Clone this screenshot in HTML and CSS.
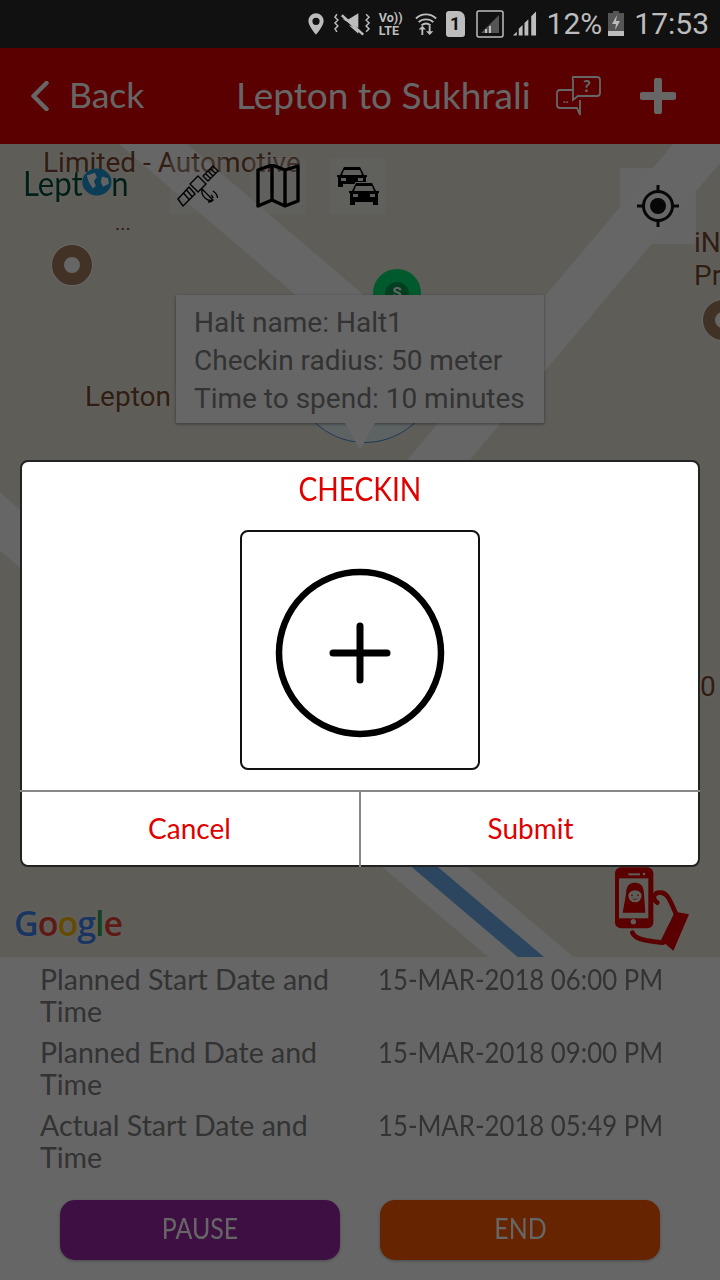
FILE: index.html
```html
<!DOCTYPE html>
<html lang="en">
<head>
<meta charset="utf-8">
<title>Lepton to Sukhrali</title>
<link rel="stylesheet" href="styles.css">
</head>
<body>
<div class="phone">
  <div class="statusbar">
    <svg class="st-ic" width="18" height="24" viewBox="0 0 20 26"><path fill="#bdbdbd" fill-rule="evenodd" d="M10 1a8.500 8.500 0 0 0-8.500 8.500C1.500 15.500 10 25 10 25s8.500-9.500 8.500-15.500A8.500 8.500 0 0 0 10 1zm0 5a4 4 0 1 1 0 8 4 4 0 0 1 0-8z"/></svg>
    <svg class="st-ic st-vib" width="37" height="26" viewBox="0 0 38 26"><path fill="#bdbdbd" d="M9 8l6 0 10-6v15zM15 14l10 9v-5z"/><path stroke="#bdbdbd" stroke-width="2.500" d="M8 4l22 20"/><path fill="none" stroke="#bdbdbd" stroke-width="1.500" d="M3 3l-2 3 3 3-3 3 3 3-3 3 2 3M33 3l3 3-3 3 3 3-3 3 3 3-3 3"/></svg>
    <div class="volte"><span>Vo))</span><span>LTE</span></div>
    <svg class="st-ic st-wifi" width="22" height="26" viewBox="0 0 24 26"><g fill="none" stroke="#bdbdbd" stroke-width="2"><path d="M1 7c6-6 16-6 22 0M4 11c4-4 12-4 16 0M7 14.500c3-2.500 7-2.500 10 0"/></g><path fill="#bdbdbd" d="M6 26v-6H3l4-4 4 4H8v6zM16 16v6h3l-4 4-4-4h3v-6z" transform="translate(1 -1)"/></svg>
    <div class="sim">1</div>
    <svg class="st-ic st-box" width="28" height="28" viewBox="0 0 28 28"><rect x="1" y="1" width="26" height="26" rx="2" fill="none" stroke="#bdbdbd" stroke-width="1.500"/><path fill="#555" d="M23 5v18H5z"/><path fill="#bdbdbd" d="M9 23h2v-4h-2zM13 23h2v-7h-2z"/></svg>
    <svg class="st-ic st-bars" width="25" height="26" viewBox="0 0 26 26"><path fill="#bdbdbd" d="M1 25l4-4v4zM7 25v-7l4-4v11zM13 25V12l4-4v17zM20 25V5l5-5v25z"/></svg>
    <span class="st-text st-pct">12%</span>
    <svg class="st-ic st-bat" width="16" height="26" viewBox="0 0 16 26"><path fill="#555" d="M5 0h6v2h5v18H0V2h5z"/><path fill="#bdbdbd" d="M0 20h16v5H0zM9 4L4 13h4l-1 6 5-9H8z"/></svg>
    <span class="st-text st-time">17:53</span>
  </div>

  <header class="topbar">
    <div class="back">
      <svg width="20" height="30" viewBox="0 0 20 30"><path d="M16.500 2L3.500 15l13 13" fill="none" stroke="#fff" stroke-width="4.500" stroke-linecap="round" stroke-linejoin="round"/></svg>
      <span>Back</span>
    </div>
    <h1 class="title">Lepton to Sukhrali</h1>
    <svg class="chat" width="46" height="42" viewBox="0 0 46 42"><g fill="none" stroke="#fff" stroke-width="1.800"><path d="M17 2h24a3 3 0 0 1 3 3v13a3 3 0 0 1-3 3H22l-5 4V5a3 3 0 0 1 0-3z"/><path d="M17 15H4a3 3 0 0 0-3 3v12a3 3 0 0 0 3 3h17l3 7V25"/></g><text x="27" y="17" class="chat-q">?</text><text x="7" y="28" class="chat-d">..</text></svg>
    <svg class="plus" width="36" height="36" viewBox="0 0 36 36"><path d="M18 3v30M3 18h30" stroke="#fff" stroke-width="8" stroke-linecap="round"/></svg>
  </header>

  <main class="map">
    <svg class="roads" width="720" height="813" viewBox="0 0 720 813">
      <g fill="none" stroke="#fff" stroke-width="44">
        <path d="M106-40L420 228"/>
        <path d="M755-60L351 420" stroke-width="48"/>
        <path d="M-40 343L60 429"/>
      </g>
      <path d="M353 662L578 853" fill="none" stroke="#fff" stroke-width="55"/>
      <path d="M353 662L578 853" fill="none" stroke="#6fb0ef" stroke-width="17"/>
    </svg>

    <span class="lbl lbl-limited">Limited - Automotive</span>
    <div class="logo">Lept<svg class="globe" width="34" height="28" viewBox="0 0 30 30" preserveAspectRatio="none"><circle cx="15" cy="15" r="14.500" fill="#1c9ad8"/><path fill="#f4f8f4" d="M5 8l8-3 2 5-3 4 2 5-3 3-4-7zM20 9l6 2 1 6-6 3-2-5z"/></svg>n</div>
    <span class="lbl lbl-dots">...</span>

    <button class="mapbtn sat" aria-label="Satellite"><svg width="46" height="46" viewBox="0 0 46 46"><g fill="none" stroke="#000" stroke-width="1.400" stroke-linejoin="round"><path d="M28 13L38 3l5 5-10 10zM33 8l5 5M35.500 5.500l5 5M30.500 10.500l5 5"/><path d="M3 36l11-12 6 7L8 43zM8.500 30l6 7M11.500 27l6 7"/><path d="M15 21l8-8 8 8-8 8z"/><path d="M27 26c-1 4 1 7 3 9 2 2 5 3 8 2z"/><path d="M36 32c1.500 1 2 2 2 3M38 28c3 2 4.500 4 4.500 7M33 39c2 0 4-.5 5-2"/></g></svg></button>
    <button class="mapbtn mapview" aria-label="Map"><svg width="44" height="44" viewBox="0 0 44 44"><path d="M2 6l14-5 13 5 13-4v35l-13 5-13-6-14 6zM16 1v35M29 6v36" fill="none" stroke="#000" stroke-width="3.400" stroke-linejoin="round"/></svg></button>
    <button class="mapbtn traffic" aria-label="Traffic"><svg width="44" height="46" viewBox="0 0 44 46"><path fill="#000" fill-rule="evenodd" d="M8 4h16l4 8h3v2h-1v10h-5v-3H7v3H2V14H1v-2h3zM8 7l-2 5h20l-2-5zM5 15v3h5v-3zM22 15v3h5v-3z"/><path fill="#000" fill-rule="evenodd" stroke="#eeeae2" stroke-width="2" paint-order="stroke" d="M20 20h16l4 8h3v2h-1v12h-5v-3H19v3h-5V30h-1v-2h3zM20 23l-2 5h20l-2-5zM17 31v3h5v-3zM34 31v3h5v-3z"/></svg></button>
    <button class="mapbtn locate" aria-label="My location"><svg width="44" height="44" viewBox="0 0 44 44"><circle cx="22" cy="22" r="14.500" fill="none" stroke="#000" stroke-width="3"/><circle cx="22" cy="22" r="8" fill="#000"/><path d="M22 1v7M22 36v7M1 22h7M36 22h7" stroke="#000" stroke-width="3"/></svg></button>

    <i class="poi poi-a"></i>
    <i class="poi poi-b"></i>
    <span class="lbl lbl-lepton">Lepton</span>
    <span class="lbl lbl-in">iN<br>Pr</span>
    <span class="lbl lbl-zero">0</span>

    <div class="geofence"></div>
    <div class="pin"><span>S</span></div>
    <div class="tip">
      <div>Halt name: Halt1</div>
      <div>Checkin radius: 50 meter</div>
      <div>Time to spend: 10 minutes</div>
    </div>

    <div class="google"><b class="g-b">G</b><b class="g-r">o</b><b class="g-y">o</b><b class="g-b">g</b><b class="g-g">l</b><b class="g-r">e</b></div>

    <svg class="selfie" width="100" height="100" viewBox="0 0 300 300">
      <rect x="45" y="22" width="115" height="183" rx="18" fill="#e00000"/>
      <rect x="57" y="55" width="88" height="120" fill="#ebe8dc"/>
      <rect x="85" y="40" width="35" height="6" fill="#ebe8dc"/>
      <circle cx="132" cy="42" r="4" fill="#ebe8dc"/>
      <circle cx="100" cy="185" r="8" fill="#ebe8dc"/>
      <path d="M68 158l10-55c0-30 15-35 27-35s27 5 27 35l4 55z" fill="#e00000"/>
      <ellipse cx="105" cy="108" rx="20" ry="19" fill="#ebe8dc"/>
      <path d="M85 100q20-18 40 0l-2-14-18-8-18 8z" fill="#e00000"/>
      <circle cx="96" cy="106" r="2.500" fill="#e00000"/><circle cx="114" cy="106" r="2.500" fill="#e00000"/>
      <path d="M98 116q7 5 14 0" fill="none" stroke="#e00000" stroke-width="2"/>
      <path d="M172 128c-20-14-8-33 12-30c22 3 28 30 45 66M97 218c10 22 50 25 92 30" fill="none" stroke="#e00000" stroke-width="14" stroke-linecap="round"/>
      <path d="M225 155l42 8-47 109-37-32z" fill="#e00000"/>
    </svg>
  </main>

  <section class="details">
    <div class="rows">
      <div class="row"><div class="k">Planned Start Date and Time</div><div class="v">15-MAR-2018 06:00 PM</div></div>
      <div class="row"><div class="k">Planned End Date and Time</div><div class="v">15-MAR-2018 09:00 PM</div></div>
      <div class="row"><div class="k">Actual Start Date and Time</div><div class="v">15-MAR-2018 05:49 PM</div></div>
    </div>
    <div class="actions">
      <button class="act act-pause"><span class="act-label">PAUSE</span></button>
      <button class="act act-end"><span class="act-label">END</span></button>
    </div>
  </section>

  <div class="scrim">
    <div class="dialog">
      <h2 class="d-title">CHECKIN</h2>
      <div class="photo">
        <svg class="photo-ic" width="170" height="170" viewBox="0 0 170 170"><circle cx="85" cy="85" r="81" fill="none" stroke="#000" stroke-width="6.500"/><path d="M85 58v54M58 85h54" stroke="#000" stroke-width="7" stroke-linecap="round"/></svg>
      </div>
      <div class="d-actions">
        <button class="d-btn">Cancel</button>
        <button class="d-btn">Submit</button>
      </div>
    </div>
  </div>
</div>
</body>
</html>
```
FILE: styles.css
```css
* { box-sizing: border-box; }
html, body { margin: 0; padding: 0; }
body { background: #fff; font-family: "Lato", "Liberation Sans", sans-serif; }
.phone { position: relative; width: 720px; height: 1280px; overflow: hidden; display: flex; flex-direction: column; }

.statusbar { height: 48px; background: #111; color: #bdbdbd; display: flex; align-items: center; justify-content: flex-end; padding-right: 11px; flex: none; }
.st-ic { flex: none; }
.st-vib { margin-left: 9px; }
.st-wifi { margin-left: 12px; }
.st-box { margin-left: 11px; }
.st-bars { margin-left: 8px; }
.st-bat { margin-left: 6px; }
.st-text { font-family: "Roboto", sans-serif; font-size: 30px; line-height: 48px; }
.st-pct { margin-left: 10px; }
.st-time { margin-left: 10px; }
.volte { display: flex; flex-direction: column; margin-left: 8px; font-family: "Roboto", sans-serif; font-weight: 700; font-size: 12.500px; line-height: 13px; align-items: flex-start; }
.sim { width: 19px; height: 26px; margin-left: 9px; background: #bdbdbd; color: #111; border-radius: 3px 7px 3px 3px; font: 700 18px/26px "Roboto", sans-serif; text-align: center; }

.topbar { height: 96px; background: #e00000; color: #fff; display: flex; align-items: center; padding-left: 30px; flex: none; }
.back { display: flex; align-items: center; gap: 20px; width: 206px; font-size: 35.500px; }
.back span { padding-bottom: 4px; margin-left: -1px; }
.title { margin: 0 0 4px; font-size: 37px; font-weight: 400; width: 320px; white-space: nowrap; }
.chat-q { font: 700 17px "Lato", sans-serif; fill: #fff; }
.chat-d { font: 700 12px "Lato", sans-serif; fill: #fff; }
.plus { margin-left: 38px; }

.map { position: relative; height: 813px; background: #ebe8dc; overflow: hidden; flex: none; }
.roads { position: absolute; left: 0; top: 0; }
.lbl { position: absolute; font-family: "Roboto", sans-serif; color: #7b4a2d; font-size: 28px; line-height: 36px; white-space: nowrap; text-shadow: 0 0 3px #fff; }
.lbl-limited { left: 43px; top: 1px; }
.lbl-dots { left: 115px; top: 67px; font-size: 20px; line-height: 24px; }
.lbl-lepton { left: 85px; top: 235px; }
.lbl-in { left: 694px; top: 82px; line-height: 33px; }
.lbl-zero { left: 700px; top: 525px; }

.logo { position: absolute; left: 23px; top: 18px; font-size: 35px; line-height: 40px; color: #00503a; display: flex; align-items: center; text-shadow: 0 0 3px #fff; transform: scaleX(.89); transform-origin: left center; }
.globe { margin: 0 -1px; }

.mapbtn { position: absolute; padding: 0; border: 0; background: rgba(255,255,255,.3); display: flex; align-items: center; justify-content: center; }
.sat { left: 170px; top: 14px; width: 56px; height: 56px; }
.mapview { left: 250px; top: 14px; width: 56px; height: 56px; }
.traffic { left: 330px; top: 14px; width: 56px; height: 56px; }
.locate { left: 620px; top: 24px; width: 76px; height: 76px; background: #fff; border-radius: 3px; opacity: .92; }

.poi { position: absolute; width: 40px; height: 40px; border-radius: 50%; background: #fff; border: 12.500px solid #a57a5e; box-shadow: 0 0 0 1px #fff; }
.poi-a { left: 52px; top: 101px; }
.poi-b { left: 703px; top: 156px; }

.geofence { position: absolute; left: 292px; top: 153px; width: 146px; height: 146px; border-radius: 50%; background: #e8f4f8; border: 1.500px solid #4a90d9; }
.pin { position: absolute; left: 373px; top: 125px; width: 48px; height: 48px; border-radius: 50%; background: #00e070; display: flex; justify-content: center; padding-top: 13px; }
.pin span { width: 24px; height: 24px; border-radius: 50%; background: #00a050; color: #fff; font: 700 15px/22px "Roboto", sans-serif; text-align: center; }
.tip { position: absolute; left: 176px; top: 151px; width: 368px; height: 128px; background: #fff; color: #808080; padding: 9px 0 0 18px; font-family: "Roboto", sans-serif; font-size: 28px; line-height: 38px; box-shadow: 0 1px 3px rgba(0,0,0,.4); }
.tip::after { content: ""; position: absolute; left: 169px; top: 128px; border-style: solid; border-width: 27px 15px 0; border-color: #fff transparent transparent; }

.google { position: absolute; left: 14px; top: 759px; font-family: "Open Sans", sans-serif; font-size: 34px; line-height: 40px; letter-spacing: -1px; text-shadow: 0 0 3px #fff; }
.google b { font-weight: 600; }
.g-b { color: #4285f4; } .g-r { color: #ea4335; } .g-y { color: #fbbc05; } .g-g { color: #34a853; }
.selfie { position: absolute; left: 600px; top: 716px; }

.details { flex: 1; background: #fff; color: #808080; padding: 6px 40px 0; display: flex; flex-direction: column; }
.rows { display: flex; flex-direction: column; gap: 9px; }
.row { display: flex; font-size: 28.500px; line-height: 32px; }
.k { width: 338px; flex: none; padding-right: 20px; }
.v { white-space: nowrap; font-size: 28px; transform: scaleX(.92); transform-origin: left center; }
.actions { display: flex; justify-content: center; gap: 40px; margin: 27px -40px 0; }
.act { width: 280px; height: 60px; border: 0; padding: 0 0 4px; border-radius: 15px; color: #fff; font: 400 28px "Lato", sans-serif; box-shadow: 0 1px 3px rgba(0,0,0,.3); }
.act-label { display: inline-block; transform: scaleX(.89); }
.act-pause { background: #9c27a8; }
.act-end { background: #ff5a00; }

.scrim { position: absolute; left: 0; top: 48px; right: 0; bottom: 0; background: rgba(0,0,0,.6); padding: 412px 20px 0; }
.dialog { height: 407px; background: #fff; border: 2px solid #222; border-radius: 8px; display: flex; flex-direction: column; align-items: center; }
.d-title { margin: 7px 0 0; font-size: 32px; line-height: 40px; font-weight: 400; color: #e00000; transform: scaleX(.88); }
.photo { width: 240px; height: 240px; margin-top: 21px; border: 2px solid #111; border-radius: 8px; display: flex; align-items: center; justify-content: center; }
.photo-ic { margin-top: 6px; filter: blur(.6px); }
.d-actions { margin: 20px 0 -2px; width: 680px; flex: 1; display: flex; border-top: 2px solid #888; }
.d-btn { flex: 1; background: none; border: 0; color: #e00000; font: 400 28px "Lato", sans-serif; padding: 0 0 4px; }
.d-btn + .d-btn { border-left: 2px solid #888; }
```
